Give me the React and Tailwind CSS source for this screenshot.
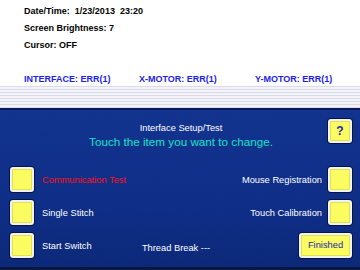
import React from 'react';

const YellowBox = ({ className = '', children }) => (
  <div
    className={`flex items-center justify-center rounded-[3px] bg-[#fbfb62] border-2 border-[#f2f2f2] ring-1 ring-[#071446] shadow-[inset_0_0_0_1px_#e0e050] ${className}`}
  >
    {children}
  </div>
);

const Label = ({ children, red }) => (
  <span className={`text-[9.3px] leading-[12px] whitespace-nowrap ${red ? 'text-[#ff1010]' : 'text-white'}`}>
    {children}
  </span>
);

const App = () => {
  return (
    <div className="w-[360px] h-[270px] overflow-hidden bg-white font-['Liberation_Sans',Arial,sans-serif]">
      {/* Status area */}
      <div className="h-[86px] pl-6 pt-[3px] font-bold text-[9px]">
        <div className="leading-[17px] text-black whitespace-pre">Date/Time:  1/23/2013  23:20</div>
        <div className="leading-[17px] text-black">Screen Brightness: 7</div>
        <div className="leading-[17px] text-black">Cursor: OFF</div>
        <div className="mt-[19px] flex leading-[12px] text-[#1c1cf2] whitespace-nowrap">
          <span className="w-[115px]">INTERFACE: ERR(1)</span>
          <span className="w-[116px]">X-MOTOR: ERR(1)</span>
          <span>Y-MOTOR: ERR(1)</span>
        </div>
      </div>

      {/* Striped divider */}
      <div className="h-[22px] bg-[repeating-linear-gradient(180deg,#dadae8_0px,#dadae8_1px,#f3f3fa_1px,#f3f3fa_3px)]" />

      {/* Setup panel */}
      <div className="relative h-[162px] border-t-2 border-t-[#0a1a5c] border-b-[3px] border-b-[#0a1740] bg-[linear-gradient(180deg,#13338f_0%,#102e88_60%,#0d2878_100%)] pl-[10px] pr-[8px] pt-[9px]">
        <svg className="pointer-events-none absolute inset-0 h-full w-full opacity-[0.3]" aria-hidden="true">
          <filter id="grain">
            <feTurbulence type="fractalNoise" baseFrequency="0.85" numOctaves="2" seed="4" />
            <feColorMatrix type="matrix" values="0 0 0 0 0  0 0 0 0 0.05  0 0 0 0 0.25  0 0 0 1.5 -0.6" />
          </filter>
          <rect width="100%" height="100%" filter="url(#grain)" />
        </svg>

        <div className="relative grid grid-cols-[1fr_auto_1fr] items-start">
          <div />
          <div className="flex flex-col items-center pt-[2.5px]">
            <span className="text-[9.3px] leading-[13px] text-white">Interface Setup/Test</span>
            <span className="text-[11.7px] leading-[14px] text-[#16e2c4]">Touch the item you want to change.</span>
          </div>
          <div className="flex justify-end">
            <YellowBox className="w-6 h-6">
              <span className="text-[12px] font-bold leading-none text-[#1a2aa8]">?</span>
            </YellowBox>
          </div>
        </div>

        <div className="relative mt-[18.5px] flex flex-col gap-2">
          <div className="grid grid-cols-[1fr_auto_1fr] items-center">
            <div className="flex items-center gap-2">
              <YellowBox className="w-6 h-[25px]" />
              <Label red>Communication Test</Label>
            </div>
            <div />
            <div className="flex items-center justify-end gap-[6px]">
              <Label>Mouse Registration</Label>
              <YellowBox className="w-6 h-[25px]" />
            </div>
          </div>

          <div className="grid grid-cols-[1fr_auto_1fr] items-center">
            <div className="flex items-center gap-2">
              <YellowBox className="w-6 h-[25px]" />
              <Label>Single Stitch</Label>
            </div>
            <div />
            <div className="flex items-center justify-end gap-[6px]">
              <Label>Touch Calibration</Label>
              <YellowBox className="w-6 h-[25px]" />
            </div>
          </div>

          <div className="grid grid-cols-[1fr_auto_1fr] items-center">
            <div className="flex items-center gap-2">
              <YellowBox className="w-6 h-[25px]" />
              <Label>Start Switch</Label>
            </div>
            <div className="mr-[10px]">
              <Label>Thread Break ---</Label>
            </div>
            <div className="flex justify-end">
              <YellowBox className="w-[53px] h-[25px]">
                <span className="text-[9.3px] leading-none text-[#1a2aa8]">Finished</span>
              </YellowBox>
            </div>
          </div>
        </div>
      </div>
    </div>
  );
};

export default App;
